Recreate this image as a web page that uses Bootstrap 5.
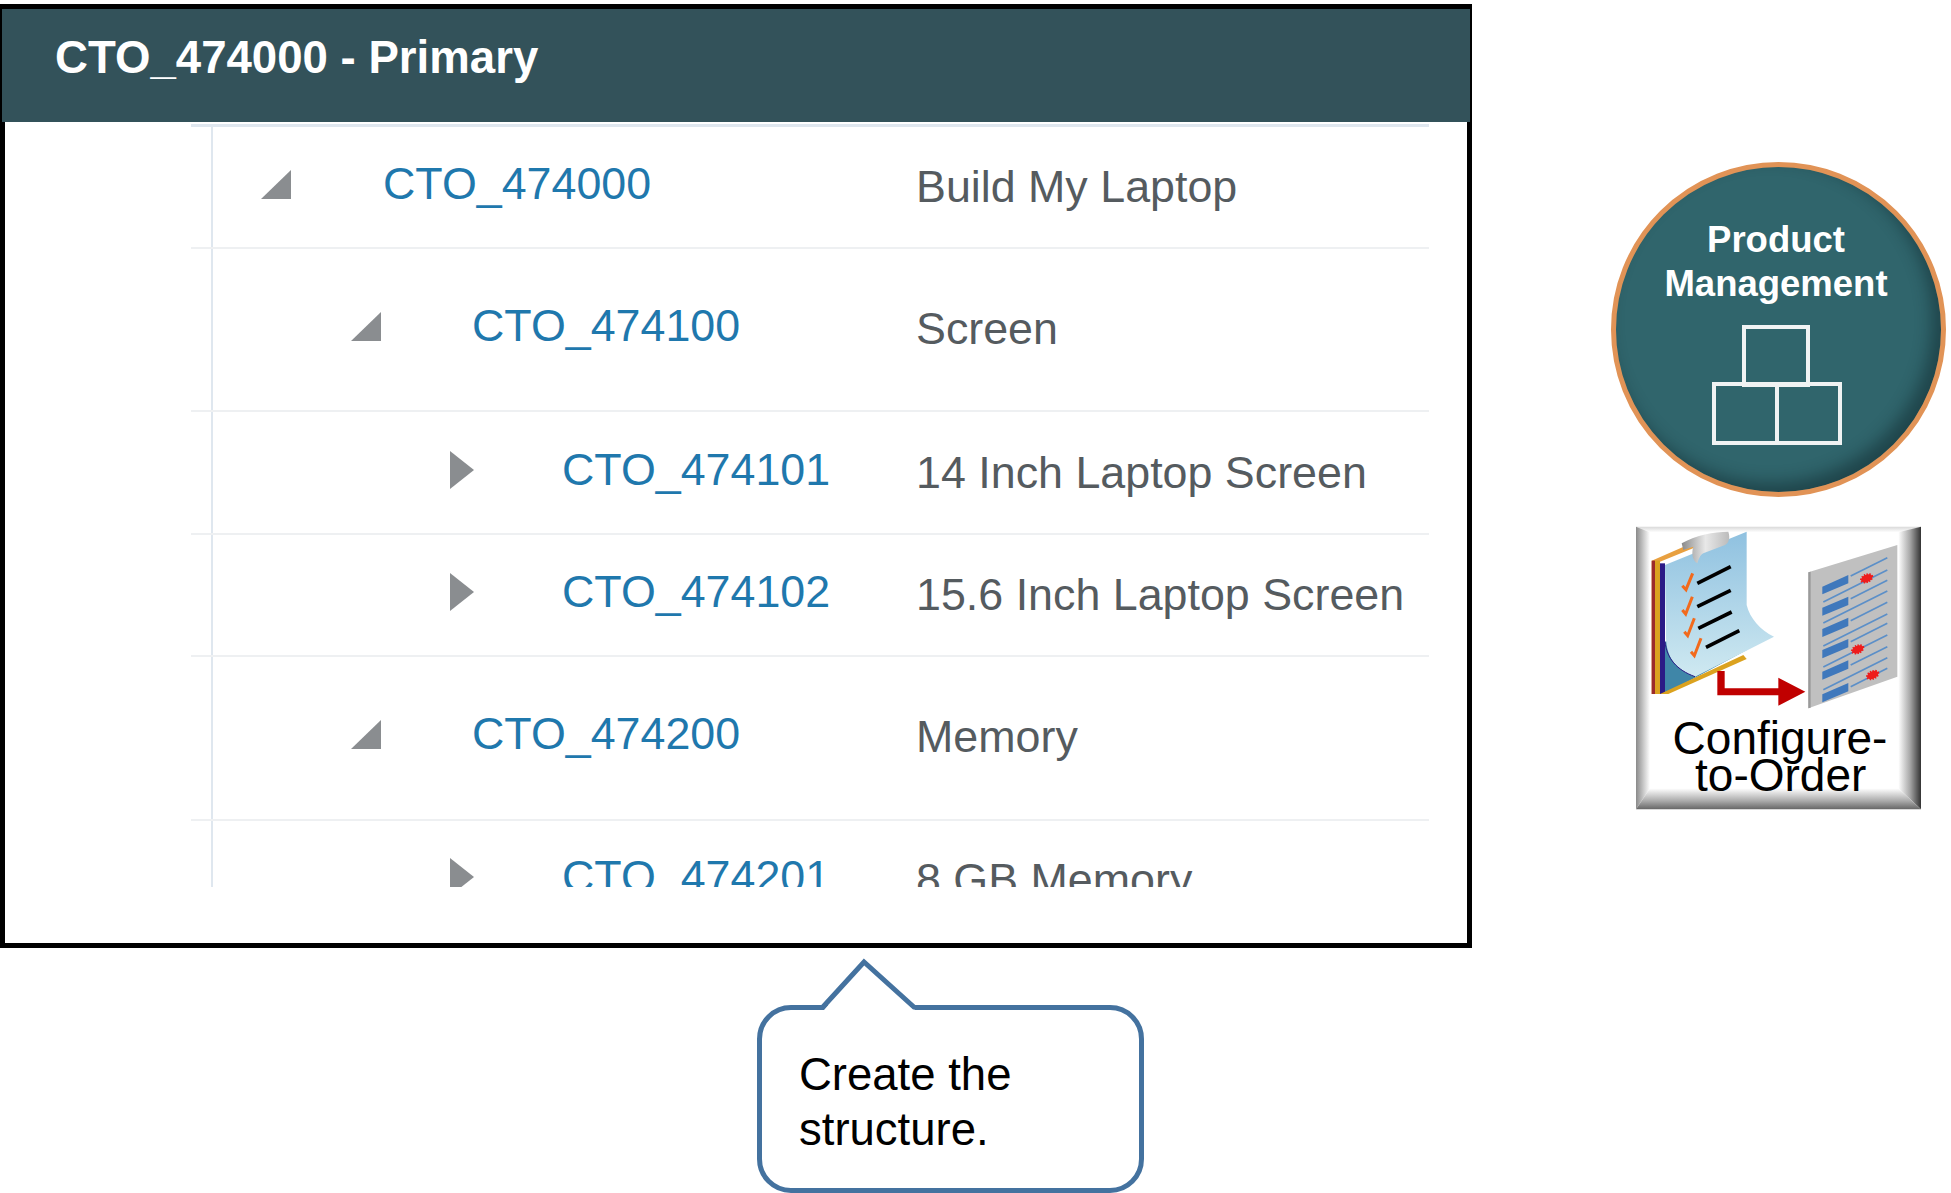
<!DOCTYPE html>
<html lang="en">
<head>
<meta charset="utf-8">
<title>CTO_474000 - Primary</title>
<link href="https://cdn.jsdelivr.net/npm/bootstrap@5.3.0/dist/css/bootstrap.min.css" rel="stylesheet">
<style>
html,body{height:100%;overflow:hidden;background:#fff}
body{font-family:"Liberation Sans",Arial,sans-serif;color:#000}
.stage{width:1951px;height:1193px;overflow:hidden}
.left-col{width:1473px;flex:none}
.right-col{width:478px;flex:none}
.panel-box.card{width:1472px;height:944px;margin-top:4px;border:5px solid #000;border-radius:0;background:#fff;overflow:visible}
.panel-head.card-header{height:113px;margin:0 -3px;padding:23px 0 0 53px;background:#33525a;border:0;border-radius:0;color:#fff;font-size:45.6px;line-height:52px;font-weight:700}
.tree-wrap{margin:2px 0 0 186px;width:1238px;height:763px;overflow:hidden;background:linear-gradient(#dfe7ef,#dfe7ef) 20px 0/2px 100% no-repeat}
.tree-row{border-top:2px solid #eef0f2;font-size:44.8px;line-height:44px;background:linear-gradient(#dfe7ef,#dfe7ef) 0 -2px/22px 2px no-repeat}
.tree-row:first-child{border-top:3px solid #dfe7ef}
.row-a{height:122.5px;padding-top:33.5px}
.row-b{height:163.5px;padding-top:54px}
.row-c{height:122.5px;padding-top:34.5px}
.row-last{height:80px;padding-top:33px}
.tree-cell{width:725px;flex:none}
.lvl-0{padding-left:70px}
.lvl-1{padding-left:160px}
.lvl-2{padding-left:249px}
.arrow-cell{width:122px;flex:none;height:44px}
.lvl-1 .arrow-cell{width:121px}
.arrow-down{display:block;margin-top:9px}
.arrow-right{display:block;margin:4px 0 0 10px}
.tree-link{color:#1f78ad;text-decoration:none}
.tree-desc{color:#555b5f;padding-top:3px}
.bubble{width:387px;height:188px;margin:57px 0 0 757px;border:5px solid #44729f;border-radius:34px;padding:37px 0 0 37px;font-size:45.5px;line-height:55px;color:#000}
.bubble-tip{position:absolute;left:55px;top:-53px;display:block}
.round-badge{width:335px;height:335px;margin:162px 0 0 138px;border:5px solid #e19356;background:#30656c;box-shadow:inset -9px -9px 16px rgba(10,30,35,.45);padding:51px 5px 0 0;color:#fff;font-size:36.5px;line-height:44px;font-weight:700}
.round-icon{display:block;margin:19px auto 0;position:relative;left:1px}
.cto-art{display:block;margin:18px 0 0 147px}
</style>
</head>
<body class="m-0">
<div class="stage d-flex">
  <div class="left-col d-flex flex-column">
    <div class="card panel-box">
      <div class="card-header panel-head">CTO_474000 - Primary</div>
      <div class="tree-wrap">
        <div class="tree-row row-a d-flex align-items-start">
          <div class="tree-cell lvl-0 d-flex">
            <div class="arrow-cell"><svg class="arrow-down" width="30" height="29" viewBox="0 0 30 29"><polygon points="30,0 30,29 0,29" fill="#8a8d90"/></svg></div>
            <a class="tree-link" href="#">CTO_474000</a>
          </div>
          <div class="tree-desc">Build My Laptop</div>
        </div>
        <div class="tree-row row-b d-flex align-items-start">
          <div class="tree-cell lvl-1 d-flex">
            <div class="arrow-cell"><svg class="arrow-down" width="30" height="29" viewBox="0 0 30 29"><polygon points="30,0 30,29 0,29" fill="#8a8d90"/></svg></div>
            <a class="tree-link" href="#">CTO_474100</a>
          </div>
          <div class="tree-desc">Screen</div>
        </div>
        <div class="tree-row row-c d-flex align-items-start">
          <div class="tree-cell lvl-2 d-flex">
            <div class="arrow-cell"><svg class="arrow-right" width="24" height="38" viewBox="0 0 24 38"><polygon points="0,0 24,19 0,38" fill="#8a8d90"/></svg></div>
            <a class="tree-link" href="#">CTO_474101</a>
          </div>
          <div class="tree-desc">14 Inch Laptop Screen</div>
        </div>
        <div class="tree-row row-c d-flex align-items-start">
          <div class="tree-cell lvl-2 d-flex">
            <div class="arrow-cell"><svg class="arrow-right" width="24" height="38" viewBox="0 0 24 38"><polygon points="0,0 24,19 0,38" fill="#8a8d90"/></svg></div>
            <a class="tree-link" href="#">CTO_474102</a>
          </div>
          <div class="tree-desc">15.6 Inch Laptop Screen</div>
        </div>
        <div class="tree-row row-b d-flex align-items-start">
          <div class="tree-cell lvl-1 d-flex">
            <div class="arrow-cell"><svg class="arrow-down" width="30" height="29" viewBox="0 0 30 29"><polygon points="30,0 30,29 0,29" fill="#8a8d90"/></svg></div>
            <a class="tree-link" href="#">CTO_474200</a>
          </div>
          <div class="tree-desc">Memory</div>
        </div>
        <div class="tree-row row-last d-flex align-items-start">
          <div class="tree-cell lvl-2 d-flex">
            <div class="arrow-cell"><svg class="arrow-right" width="24" height="38" viewBox="0 0 24 38"><polygon points="0,0 24,19 0,38" fill="#8a8d90"/></svg></div>
            <a class="tree-link" href="#">CTO_474201</a>
          </div>
          <div class="tree-desc">8 GB Memory</div>
        </div>
      </div>
    </div>
    <div class="bubble position-relative">
      <svg class="bubble-tip" width="104" height="60" viewBox="0 0 104 60"><polygon points="6,54 47,7 99,54" fill="#fff"/><polyline points="5,51 47,5 98,51" fill="none" stroke="#44729f" stroke-width="5"/></svg>
      Create the<br>structure.
    </div>
  </div>
  <div class="right-col d-flex flex-column">
    <div class="round-badge rounded-circle text-center">
      Product<br>Management
      <svg class="round-icon" width="130" height="120" viewBox="0 0 130 120" fill="none" stroke="#f0f3f3" stroke-width="4"><rect x="32" y="2" width="64" height="58"/><rect x="2" y="59" width="63" height="59"/><rect x="65" y="59" width="63" height="59"/></svg>
    </div>
    <svg class="cto-art" width="310" height="300" viewBox="0 0 930 900">
      <defs>
        <linearGradient id="bt" x1="0" y1="0" x2="0" y2="1"><stop offset="0" stop-color="#d8d8d8"/><stop offset="1" stop-color="#fff"/></linearGradient>
        <linearGradient id="bl" x1="0" y1="0" x2="1" y2="0"><stop offset="0" stop-color="#8a8a8a"/><stop offset="1" stop-color="#fff"/></linearGradient>
        <linearGradient id="br" x1="0" y1="0" x2="1" y2="0"><stop offset="0" stop-color="#fff"/><stop offset=".5" stop-color="#aaa"/><stop offset="1" stop-color="#333"/></linearGradient>
        <linearGradient id="bb" x1="0" y1="0" x2="0" y2="1"><stop offset="0" stop-color="#fff"/><stop offset=".6" stop-color="#aaa"/><stop offset="1" stop-color="#666"/></linearGradient>
        <linearGradient id="pg" x1="0" y1="0" x2="0" y2="1"><stop offset="0" stop-color="#8fc1e0"/><stop offset="1" stop-color="#cfe9f1"/></linearGradient>
        <linearGradient id="cl" x1="0" y1="0" x2="1" y2="0"><stop offset="0" stop-color="#8a8a8a"/><stop offset=".5" stop-color="#e8e8e8"/><stop offset="1" stop-color="#bbb"/></linearGradient>
      </defs>
      <rect x="48" y="35" width="855" height="848" fill="#fff"/>
      <polygon points="48,35 903,35 850,52 90,52" fill="url(#bt)"/>
      <polygon points="48,35 90,52 90,820 48,883" fill="url(#bl)"/>
      <polygon points="903,35 903,883 835,820 835,52" fill="url(#br)"/>
      <polygon points="48,883 903,883 835,820 90,820" fill="url(#bb)"/>
      <polygon points="95,137 215,85 230,95 120,140 135,537 95,537" fill="#e8a040"/>
      <rect x="95" y="137" width="10" height="400" fill="#9c2a2a"/>
      <rect x="105" y="137" width="15" height="400" fill="#dba21f"/>
      <rect x="120" y="145" width="15" height="392" fill="#2b1a86"/>
      <polygon points="135,380 380,300 380,405 135,537" fill="#3f86a8"/>
      <polygon points="120,537 145,537 380,432 370,420" fill="#dba21f"/>
      <path d="M135 150 L380 50 L380 270 C390 310 420 345 462 365 L225 485 C170 465 140 430 138 370 Z" fill="url(#pg)"/>
      <path d="M135 380 C140 430 170 465 225 485" fill="none" stroke="#2b1a86" stroke-width="3"/>
      <path d="M185 85 C230 60 280 50 325 50 C332 70 325 85 315 90 L250 115 C240 120 235 135 232 145 C215 135 215 110 220 95 L190 105 Z" fill="url(#cl)"/>
      <g stroke="#000" stroke-width="11" fill="none">
        <path d="M232 205 L332 155"/><path d="M232 275 L332 226"/><path d="M235 340 L335 291"/><path d="M258 397 L358 347"/>
      </g>
      <g stroke="#f26a1c" stroke-width="9" fill="none">
        <path d="M187 212 L198 224 L218 175"/><path d="M187 285 L197 297 L217 245"/><path d="M193 350 L203 362 L223 310"/><path d="M213 410 L223 422 L243 370"/>
      </g>
      <polygon points="292,468 314,468 314,520 475,520 475,488 556,530 475,572 475,541 292,541" fill="#c00000"/>
      <polygon points="565,172 832,90 832,485 565,580" fill="#c0c0c0"/>
      <polygon points="565,172 572,170 572,578 565,580" fill="#9a9a9a"/>
      <g fill="#3f78bc">
        <polygon points="607,215 685,180 685,205 607,238"/><polygon points="607,278 685,245 685,270 607,302"/><polygon points="607,342 685,308 685,333 607,366"/><polygon points="607,405 685,372 685,397 607,430"/><polygon points="607,470 685,436 685,461 607,494"/><polygon points="607,538 685,504 685,529 607,562"/>
      </g>
      <g stroke="#5b8fc8" stroke-width="5" fill="none">
        <path d="M692 183 L802 128"/><path d="M610 261 L802 165"/><path d="M692 251 L802 196"/><path d="M610 324 L802 228"/><path d="M692 317 L802 262"/><path d="M610 393 L802 297"/><path d="M692 380 L802 325"/><path d="M610 456 L802 360"/><path d="M692 450 L802 395"/><path d="M610 524 L802 428"/><path d="M692 515 L802 460"/>
      </g>
      <g fill="#ee1c1c" stroke="#ee1c1c" stroke-width="6" stroke-dasharray="4 4">
        <ellipse cx="740" cy="190" rx="18" ry="11" transform="rotate(-25 740 190)"/><ellipse cx="713" cy="403" rx="18" ry="11" transform="rotate(-25 713 403)"/><ellipse cx="758" cy="480" rx="18" ry="11" transform="rotate(-25 758 480)"/>
      </g>
      <text x="480" y="717" text-anchor="middle" font-size="138" fill="#000">Configure-</text>
      <text x="482" y="828" text-anchor="middle" font-size="138" fill="#000">to-Order</text>
    </svg>
  </div>
</div>
<script src="https://cdn.jsdelivr.net/npm/bootstrap@5.3.0/dist/js/bootstrap.bundle.min.js"></script>
</body>
</html>
